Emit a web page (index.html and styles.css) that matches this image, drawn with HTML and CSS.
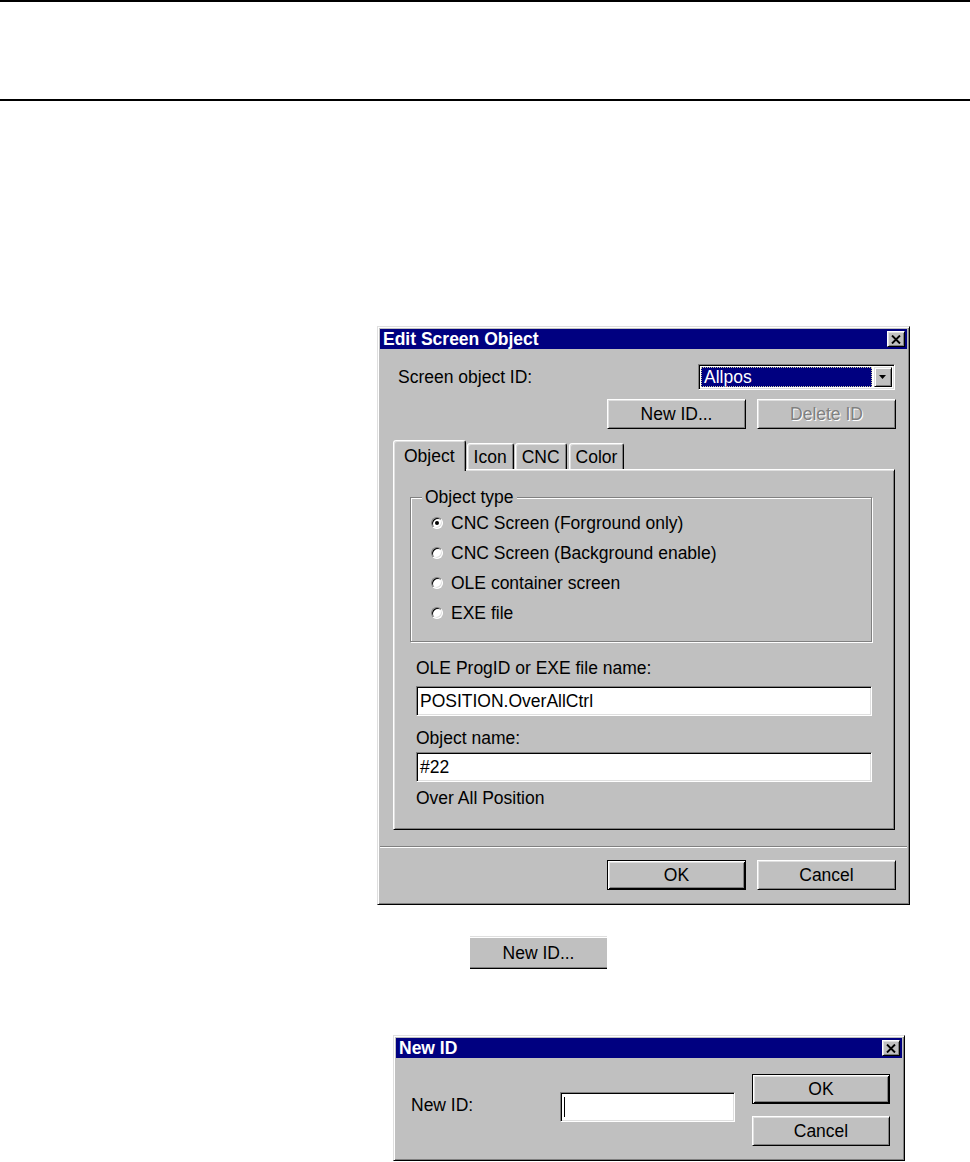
FILE: index.html
```html
<!DOCTYPE html>
<html lang="en">
<head>
<meta charset="utf-8">
<title>Edit Screen Object</title>
<link rel="stylesheet" href="styles.css">
</head>
<body>
<header class="running-head"></header>

<figure class="fig fig-edit">
  <div class="win dlg-edit">
    <div class="titlebar">
      <span class="title">Edit Screen Object</span>
      <span class="close-btn">
        <svg width="10" height="9" viewBox="0 0 10 9"><path d="M1 0.5 L9 8.5 M9 0.5 L1 8.5" stroke="#000" stroke-width="1.9" fill="none"/></svg>
      </span>
    </div>
    <div class="dlg-main">
      <div class="id-row">
        <span class="lbl">Screen object ID:</span>
        <div class="combo">
          <div class="combo-field"><span class="combo-sel">Allpos</span></div>
          <span class="combo-btn">
            <svg width="8" height="4" viewBox="0 0 8 4"><polygon points="0,0 7,0 3.5,4" fill="#000"/></svg>
          </span>
        </div>
      </div>
      <div class="btn-row">
        <span class="btn">New ID...</span>
        <span class="btn is-disabled">Delete ID</span>
      </div>
      <div class="tabs">
        <span class="tab is-active">Object</span>
        <span class="tab">Icon</span>
        <span class="tab">CNC</span>
        <span class="tab tab-last">Color</span>
      </div>
      <div class="tab-panel">
        <div class="group">
          <span class="group-title">Object type</span>
          <div class="radio-row"><span class="radio is-checked"></span><span>CNC Screen (Forground only)</span></div>
          <div class="radio-row"><span class="radio"></span><span>CNC Screen (Background enable)</span></div>
          <div class="radio-row"><span class="radio"></span><span>OLE container screen</span></div>
          <div class="radio-row"><span class="radio"></span><span>EXE file</span></div>
        </div>
        <div class="field-lbl">OLE ProgID or EXE file name:</div>
        <div class="textbox">POSITION.OverAllCtrl</div>
        <div class="field-lbl lbl-tight">Object name:</div>
        <div class="textbox tb-second">#22</div>
        <div class="field-lbl lbl-note">Over All Position</div>
      </div>
    </div>
    <div class="separator"></div>
    <div class="dlg-footer">
      <span class="btn btn-default">OK</span>
      <span class="btn">Cancel</span>
    </div>
  </div>
</figure>

<figure class="fig fig-button">
  <div class="btn-clip">New ID...</div>
</figure>

<figure class="fig fig-newid">
  <div class="win dlg-newid">
    <div class="titlebar">
      <span class="title">New ID</span>
      <span class="close-btn">
        <svg width="10" height="9" viewBox="0 0 10 9"><path d="M1 0.5 L9 8.5 M9 0.5 L1 8.5" stroke="#000" stroke-width="1.9" fill="none"/></svg>
      </span>
    </div>
    <div class="newid-body">
      <div class="newid-input-row">
        <span class="newid-lbl">New ID:</span>
        <div class="textbox newid-tb"><span class="caret"></span></div>
      </div>
      <div class="newid-buttons">
        <span class="btn btn-default">OK</span>
        <span class="btn">Cancel</span>
      </div>
    </div>
  </div>
</figure>
</body>
</html>
```

FILE: styles.css
```css
* {
  box-sizing: border-box;
}

body {
  margin: 0;
  background: #fff;
  font-family: "Liberation Sans", Arial, sans-serif;
  font-size: 17.5px;
  color: #000;
}

/* page header rules */
.running-head {
  height: 101px;
  border-top: 2px solid #000;
  border-bottom: 2px solid #000;
}

.fig {
  margin: 0;
}

.fig-edit {
  margin: 225px 0 0 377px;
}

.fig-button {
  margin: 31px 0 0 470px;
}

.fig-newid {
  margin: 66px 0 0 393px;
}

/* Win95 style window frame */
.win {
  background: #c0c0c0;
  border: 1px solid;
  border-color: #dfdfdf #000 #000 #dfdfdf;
  box-shadow: inset 1px 1px #fff, inset -1px -1px #808080;
  padding: 2px;
}

.dlg-edit {
  width: 533px;
}

.dlg-newid {
  width: 512px;
  height: 126px;
}

.titlebar {
  height: 20px;
  background: #000080;
  display: flex;
  align-items: center;
  justify-content: space-between;
  padding: 0 2px 0 3px;
}

.title {
  color: #fff;
  font-weight: bold;
  line-height: 20px;
}

.close-btn {
  width: 18px;
  height: 16px;
  background: #c0c0c0;
  border: 1px solid;
  border-color: #fff #000 #000 #fff;
  box-shadow: inset 1px 1px #dfdfdf, inset -1px -1px #808080;
  display: flex;
  align-items: center;
  justify-content: center;
}

.close-btn svg {
  display: block;
}

/* main dialog content */
.dlg-main {
  padding: 0 12px 0 13px;
}

.id-row {
  display: flex;
  align-items: center;
  justify-content: space-between;
  margin-top: 15px;
  height: 26px;
}

.lbl {
  padding-left: 5px;
  line-height: 20px;
}

.combo {
  width: 197px;
  height: 26px;
  display: flex;
  background: #fff;
  border: 1px solid;
  border-color: #808080 #fff #fff #808080;
  box-shadow: inset 1px 1px #000, inset -1px -1px #dfdfdf;
  padding: 2px;
}

.combo-field {
  flex: 1;
  padding: 0 2px 0 0;
}

.combo-sel {
  display: block;
  height: 100%;
  background: #000080;
  color: #fff;
  outline: 1px dotted #c8c8a0;
  outline-offset: -1px;
  padding-left: 3px;
  line-height: 21px;
}

.combo-btn {
  width: 18px;
  background: #c0c0c0;
  border: 1px solid;
  border-color: #dfdfdf #000 #000 #dfdfdf;
  box-shadow: inset 1px 1px #fff, inset -1px -1px #808080;
  display: flex;
  align-items: center;
  justify-content: center;
}

.btn-row {
  display: flex;
  justify-content: flex-end;
  gap: 11px;
  margin: 9px -1px 0 0;
}

.btn {
  width: 139px;
  height: 30px;
  display: flex;
  align-items: center;
  justify-content: center;
  background: #c0c0c0;
  border: 1px solid;
  border-color: #fff #000 #000 #fff;
  box-shadow: inset 1px 1px #dfdfdf, inset -1px -1px #808080;
  line-height: 20px;
}

.btn-default {
  border-color: #000;
  box-shadow: inset 1px 1px #fff, inset -1px -1px #000, inset 2px 2px #dfdfdf, inset -2px -2px #808080;
}

.btn.is-disabled {
  color: #808080;
  text-shadow: 1px 1px #fff;
}

/* tab strip */
.tabs {
  display: flex;
  align-items: flex-end;
  gap: 1px;
  height: 29px;
  margin-top: 11px;
  position: relative;
  z-index: 1;
}

.tab {
  height: 26px;
  padding: 0 6px;
  line-height: 27px;
  background: #c0c0c0;
  border: 1px solid;
  border-bottom: 0;
  border-color: #fff #000 transparent #fff;
  border-radius: 3px 3px 0 0;
  box-shadow: inset 1px 1px #dfdfdf, inset -1px 0 #808080;
}

.tab.is-active {
  height: 31px;
  margin-bottom: -2px;
  padding: 0 10px;
  line-height: 31px;
}

.tab-last {
  margin-left: 1px;
}

.tab-panel {
  height: 361px;
  border: 1px solid;
  border-color: #fff #000 #000 #fff;
  box-shadow: inset 1px 1px #dfdfdf, inset -1px -1px #808080;
  padding: 27px 22px 0 16px;
}

/* etched group box */
.group {
  position: relative;
  height: 145px;
  border: 1px solid #808080;
  box-shadow: inset 1px 1px #fff, 1px 1px #fff;
  padding: 10px 0 0 20px;
}

.group-title {
  position: absolute;
  top: -11px;
  left: 11px;
  padding: 0 3px;
  background: #c0c0c0;
  line-height: 20px;
}

.radio-row {
  display: flex;
  align-items: center;
  gap: 8px;
  height: 30px;
}

.radio {
  width: 12px;
  height: 12px;
  border-radius: 50%;
  background: #fff;
  border: 1px solid;
  border-color: #808080 #fff #fff #808080;
  box-shadow: inset 1px 1px #000, inset -1px -1px #dfdfdf;
  display: flex;
  align-items: center;
  justify-content: center;
}

.radio.is-checked::after {
  content: "";
  width: 4px;
  height: 4px;
  border-radius: 50%;
  background: #000;
}

.field-lbl {
  line-height: 20px;
  margin: 16px 0 0 6px;
}

.lbl-tight {
  margin-top: 12px;
}

.lbl-note {
  margin-top: 6px;
}

.textbox {
  height: 30px;
  margin: 8px 0 0 6px;
  background: #fff;
  border: 1px solid;
  border-color: #808080 #fff #fff #808080;
  box-shadow: inset 1px 1px #000, inset -1px -1px #dfdfdf;
  padding: 0 3px;
  line-height: 28px;
}

.tb-second {
  margin-top: 4px;
}

.separator {
  margin-top: 16px;
  border-top: 1px solid #808080;
  border-bottom: 1px solid #fff;
}

.dlg-footer {
  display: flex;
  justify-content: flex-end;
  gap: 11px;
  padding: 12px 11px 12px 0;
}

/* lone button sample */
.btn-clip {
  width: 137px;
  height: 33px;
  background: #c0c0c0;
  border-top: 1px solid #dfdfdf;
  border-bottom: 1px solid #000;
  box-shadow: inset 0 1px #fff, inset 0 -1px #808080;
  display: flex;
  align-items: center;
  justify-content: center;
  line-height: 20px;
}

/* New ID dialog */
.newid-body {
  display: flex;
  justify-content: space-between;
  padding: 16px 12px 12px 15px;
}

.newid-input-row {
  display: flex;
  align-items: center;
  margin-top: 18px;
  height: 30px;
}

.newid-lbl {
  width: 149px;
  line-height: 20px;
  margin-top: -4px;
}

.newid-tb {
  width: 175px;
  margin: 0;
  display: flex;
  align-items: center;
}

.caret {
  width: 1px;
  height: 20px;
  background: #000;
}

.newid-buttons {
  display: flex;
  flex-direction: column;
  gap: 12px;
}

.newid-buttons .btn {
  width: 138px;
}
```
